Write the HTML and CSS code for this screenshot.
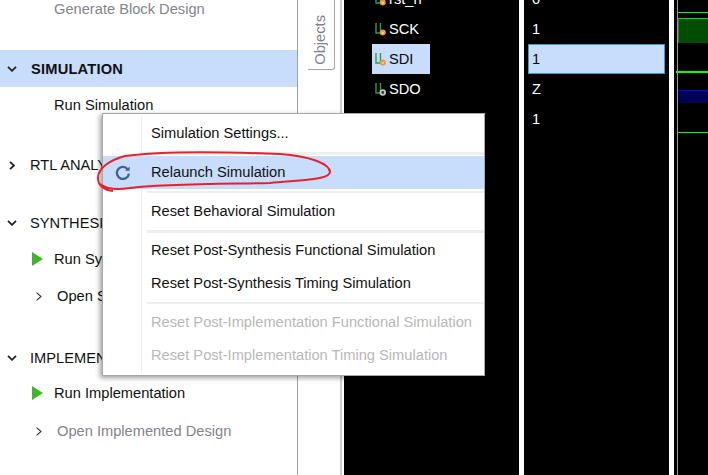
FILE: index.html
```html
<!DOCTYPE html>
<html lang="en">
<head>
<meta charset="utf-8">
<title>Relaunch Simulation</title>
<link rel="stylesheet" href="styles.css">
</head>
<body>
<div class="app">
  <nav class="tree">
    <div class="row leaf muted r18">Generate Block Design</div>
    <div class="row sec active r37"><svg class="chev-d" viewBox="0 0 10 6"><path d="M1 .8 5 4.8 9 .8"/></svg><b>SIMULATION</b></div>
    <div class="row leaf r36">Run Simulation</div>
    <div class="row sec r36 m24"><svg class="chev-r" viewBox="0 0 6 9"><path d="M1 .8 5 4.5 1 8.2"/></svg>RTL ANALYSIS</div>
    <div class="row sec r36 m22"><svg class="chev-d" viewBox="0 0 10 6"><path d="M1 .8 5 4.8 9 .8"/></svg>SYNTHESIS</div>
    <div class="row run r36"><svg class="play" viewBox="0 0 11 14"><path d="M0 0 11 7 0 14Z"/></svg>Run Synthesis</div>
    <div class="row open r36 m1"><svg class="chev-o" viewBox="0 0 6 9"><path d="M.6.6 5 4.5.6 8.4"/></svg><span>Open Synthesized Design</span></div>
    <div class="row sec r35 m26"><svg class="chev-d" viewBox="0 0 10 6"><path d="M1 .8 5 4.8 9 .8"/></svg>IMPLEMENTATION</div>
    <div class="row run r36"><svg class="play" viewBox="0 0 11 14"><path d="M0 0 11 7 0 14Z"/></svg>Run Implementation</div>
    <div class="row open muted r36 m2"><svg class="chev-o" viewBox="0 0 6 9"><path d="M.6.6 5 4.5.6 8.4"/></svg><span>Open Implemented Design</span></div>
  </nav>

  <aside class="strip">
    <div class="tab"><span>Objects</span></div>
  </aside>

  <section class="names">
    <div class="sig"><svg class="wire" viewBox="0 0 11 13"><path d="M1 0V10H5.5V0"/><circle class="in" cx="7.8" cy="9.5" r="3"/><path class="vee" d="M6.6 8.6 7.8 11 9 8.6"/></svg>rst_n</div>
    <div class="sig"><svg class="wire" viewBox="0 0 11 13"><path d="M1 0V10H5.5V0"/><circle class="in" cx="7.8" cy="9.5" r="3"/><path class="vee" d="M6.6 8.6 7.8 11 9 8.6"/></svg>SCK</div>
    <div class="sig sel"><svg class="wire" viewBox="0 0 11 13"><path d="M1 0V10H5.5V0"/><circle class="in" cx="7.8" cy="9.5" r="3"/><path class="vee" d="M6.6 8.6 7.8 11 9 8.6"/></svg>SDI</div>
    <div class="sig"><svg class="wire" viewBox="0 0 11 13"><path d="M1 0V10H5.5V0"/><circle class="out" cx="7.8" cy="9.5" r="2.3"/></svg>SDO</div>
  </section>

  <section class="values">
    <div class="val">0</div>
    <div class="val">1</div>
    <div class="val sel">1</div>
    <div class="val">Z</div>
    <div class="val">1</div>
  </section>

  <section class="wave">
    <i class="w-line g l12"></i>
    <i class="w-box gb"></i>
    <i class="w-line g2 l71"></i>
    <i class="w-box bb"></i>
    <i class="w-line g l132"></i>
  </section>
</div>

<div class="menu">
  <div class="item first">Simulation Settings...</div>
  <div class="sep s1"></div>
  <div class="item hot"><svg class="reload" viewBox="0 0 16 16"><path d="M12.6 5.2A6 6 0 1 0 13.9 9.6"/><path class="tip" d="M14.6 2.4V6.8H10.2Z"/></svg>Relaunch Simulation</div>
  <div class="sep s2"></div>
  <div class="item tall">Reset Behavioral Simulation</div>
  <div class="sep"></div>
  <div class="item">Reset Post-Synthesis Functional Simulation</div>
  <div class="item">Reset Post-Synthesis Timing Simulation</div>
  <div class="sep s3"></div>
  <div class="item off">Reset Post-Implementation Functional Simulation</div>
  <div class="item off">Reset Post-Implementation Timing Simulation</div>
</div>

<svg class="mark" viewBox="0 0 708 475"><path d="M113 191C105 190 98 186 98 178 98 168 110 160 125 156 160 151 230 152 280 154 310 156 330 164 330 172 330 180 300 180 270 183 220 184 160 184 130 188 118 190 108 190 100 184"/></svg>
</body>
</html>
```
FILE: styles.css
```css
* { box-sizing: border-box; }
html, body { margin: 0; height: 100%; overflow: hidden; background: #fff; }
body { font: 14.67px "Liberation Sans", Arial, sans-serif; color: #111; }

.app { display: flex; width: 708px; height: 475px; }

/* left flow navigator */
.tree { width: 298px; flex: none; border-right: 1px solid #a0a0a0; display: flex; flex-direction: column; }
.row { display: flex; align-items: center; flex: none; white-space: nowrap; }
.r18 { height: 18px; } .r35 { height: 35px; } .r36 { height: 36px; } .r37 { height: 37px; }
.m1 { margin-top: 1px; } .m2 { margin-top: 2px; } .m22 { margin-top: 22px; } .m24 { margin-top: 24px; } .m26 { margin-top: 26px; }
.leaf { padding-left: 54px; }
.sec { padding-left: 7px; gap: 13px; }
.active { margin-top: 32px; background: #c8dcfb; gap: 14px; }
.active b { letter-spacing: .2px; }
.run { padding-left: 32px; gap: 11px; }
.open { padding-left: 36px; gap: 15px; }
.muted, .open.muted span { color: #84848a; }
.chev-d { width: 10px; height: 6px; fill: none; stroke: #222; stroke-width: 1.8; }
.chev-r { width: 6px; height: 9px; margin: 0 2px; fill: none; stroke: #222; stroke-width: 1.8; }
.chev-o { width: 6px; height: 9px; fill: none; stroke: #333; stroke-width: 1.1; }
.play { width: 11px; height: 14px; fill: #3fb52a; }

/* side tab strip */
.strip { width: 46px; flex: none; background: #fff; position: relative; }
.strip::after { content: ""; position: absolute; left: 42px; top: 0; bottom: 0; width: 2px; background: #cfcfcf; }
.tab { margin-left: 10px; width: 27px; height: 70px; padding: 10px 2px 0 0; border: 1px solid #a6a6a6; border-width: 0 1px 1px 0; border-bottom-right-radius: 3px; display: flex; align-items: center; justify-content: center; }
.tab span { writing-mode: vertical-rl; transform: rotate(180deg); color: #808088; }

/* objects + values */
.names { width: 175px; flex: none; background: #000; color: #fff; padding: 0 0 0 28px; overflow: hidden; }
.sig { height: 30px; display: flex; align-items: center; gap: 4px; padding-left: 3px; width: 58px; }
.sig:first-child { margin-top: -16px; }
.sig.sel { background: #c8dcfb; color: #0a0a0a; }
.wire { width: 11px; height: 13px; flex: none; margin-top: 1px; margin-right: -1px; fill: none; stroke: #2e9e3f; stroke-width: 1.4; overflow: visible; }
.wire .in { fill: #f0952b; stroke: none; }
.wire .vee { stroke: #fff2d8; stroke-width: .7; }
.wire .out { fill: #333; stroke: #c4c4c4; stroke-width: 1.8; }

.values { width: 145px; flex: none; margin-left: 5px; background: #000; color: #fff; padding: 0 4px; overflow: hidden; }
.val { height: 30px; line-height: 30px; padding-left: 4px; }
.val:first-child { margin-top: -16px; }
.val.sel { background: #c8dcfb; color: #0a0a0a; border: 1px solid #3a96dd; line-height: 28px; padding-left: 3px; }

/* waveform canvas */
.wave { flex: 1; margin-left: 5px; background: #000; position: relative; overflow: hidden; }
.wave::before { content: ""; position: absolute; left: 3px; top: 0; bottom: 0; width: 1px; background: #9a9a9a; }
.w-line { position: absolute; left: 4px; right: 0; height: 1px; }
.g { background: #00ff00; }
.g2 { background: #00ff00; height: 2px; left: 2px; }
.l12 { top: 12px; } .l71 { top: 71px; } .l132 { top: 132px; }
.w-box { position: absolute; left: 4px; right: 0; }
.gb { top: 18px; height: 25px; background: #004d00; border-top: 1px solid #00e000; box-shadow: inset 1px 0 0 #1a8a1a; }
.bb { top: 90px; height: 13px; background: #000055; border-top: 1px solid #0000ff; }

/* context menu */
.menu { position: absolute; left: 102px; top: 113px; width: 383px; height: 263px; background: #fff; border: 1px solid #a8a8a8; box-shadow: -2px 2px 5px rgba(0,0,0,.38); }
.menu::before { content: ""; position: absolute; left: 38px; top: 3px; bottom: 3px; width: 1px; background: #ececec; }
.item { position: relative; height: 33px; display: flex; align-items: center; padding-left: 48px; white-space: nowrap; }
.first { height: 38px; }
.tall { height: 37px; padding-bottom: 1px; }
.hot { background: #c8dcfb; margin-top: 1px; padding-bottom: 1px; }
.off { color: #b8b8b8; }
.sep { height: 3px; margin-left: 44px; background: #efefef; }
.s2 { margin-top: 2px; height: 2px; }
.s3 { margin-top: 3px; height: 2px; margin-bottom: 1px; }
.reload { position: absolute; left: 12px; top: 8px; width: 16px; height: 16px; fill: none; stroke: #3f5f96; stroke-width: 2.3; }
.reload .tip { fill: #3f5f96; stroke: none; }

/* red hand-drawn annotation */
.mark { position: absolute; left: 0; top: 0; width: 708px; height: 475px; fill: none; stroke: #e8202e; stroke-width: 2; pointer-events: none; }
```
